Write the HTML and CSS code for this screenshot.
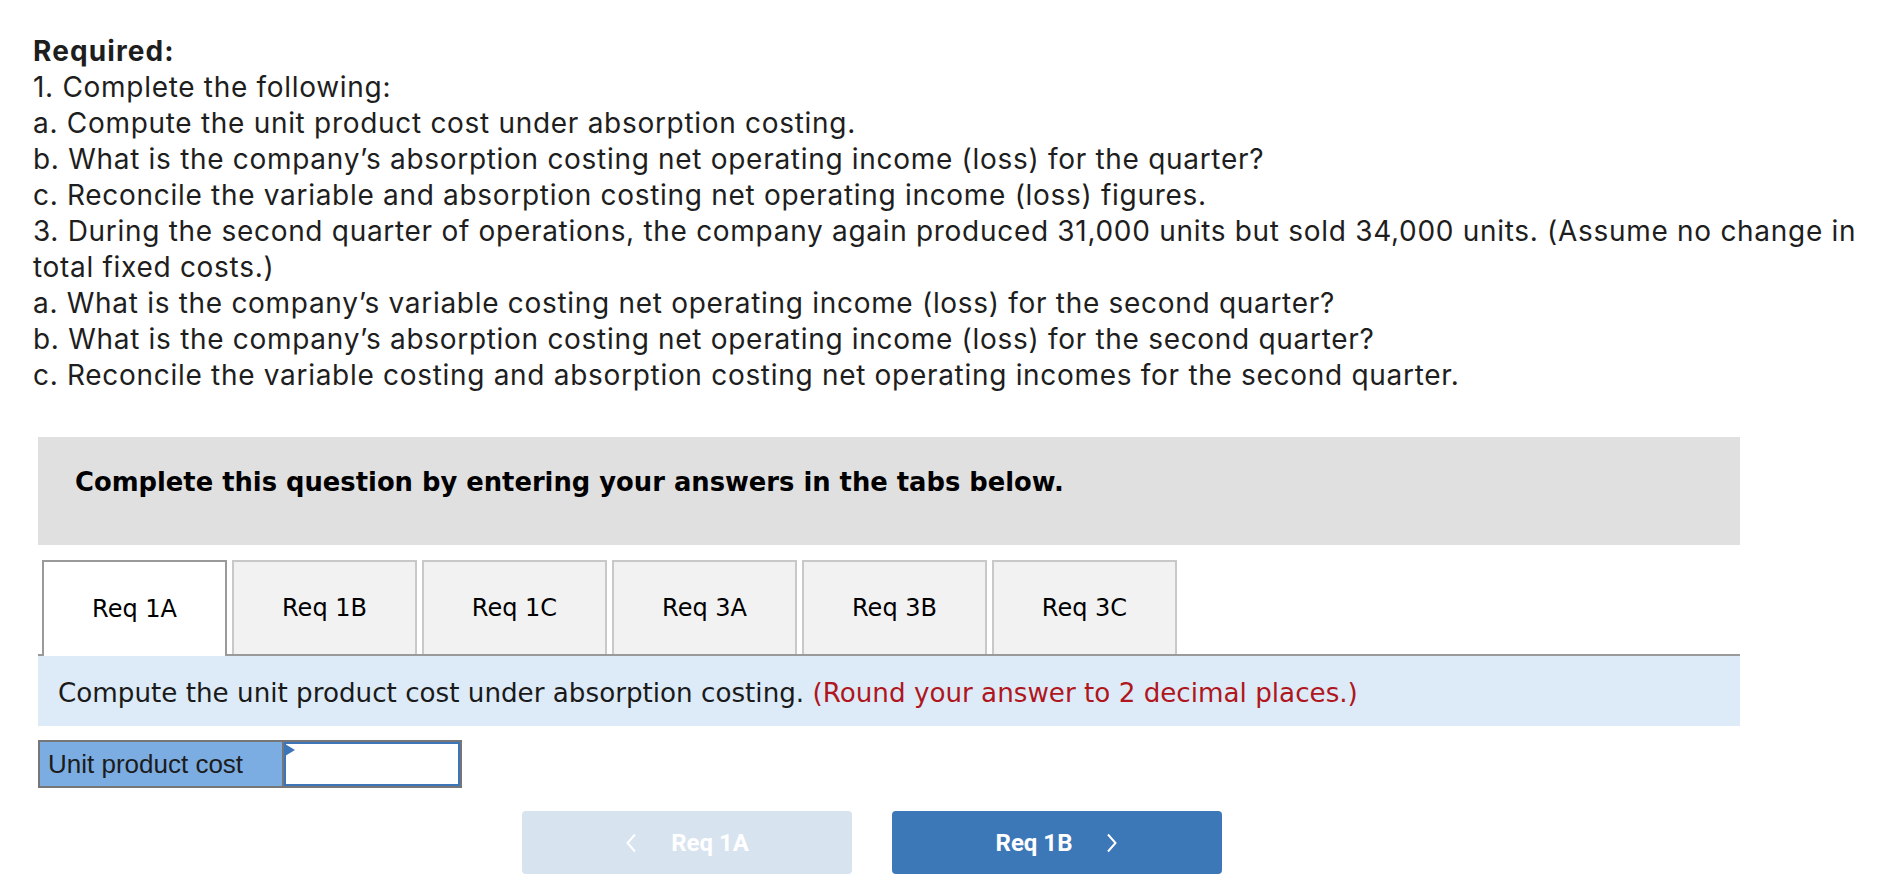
FILE: index.html
```html
<!DOCTYPE html>
<html lang="en">
<head>
<meta charset="utf-8">
<title>Required</title>
<link rel="stylesheet" href="styles.css">
</head>
<body>
<div class="required">
  <div class="req-title">Required:</div>
  <div>1. Complete the following:</div>
  <div>a. Compute the unit product cost under absorption costing.</div>
  <div>b. What is the company’s absorption costing net operating income (loss) for the quarter?</div>
  <div>c. Reconcile the variable and absorption costing net operating income (loss) figures.</div>
  <div>3. During the second quarter of operations, the company again produced 31,000 units but sold 34,000 units. (Assume no change in total fixed costs.)</div>
  <div>a. What is the company’s variable costing net operating income (loss) for the second quarter?</div>
  <div>b. What is the company’s absorption costing net operating income (loss) for the second quarter?</div>
  <div>c. Reconcile the variable costing and absorption costing net operating incomes for the second quarter.</div>
</div>

<div class="question">
  <div class="instructions">Complete this question by entering your answers in the tabs below.</div>

  <div class="tabs">
    <div class="tab active">Req 1A</div>
    <div class="tab">Req 1B</div>
    <div class="tab">Req 1C</div>
    <div class="tab">Req 3A</div>
    <div class="tab">Req 3B</div>
    <div class="tab">Req 3C</div>
  </div>
  <div class="panel">
    <span>Compute the unit product cost under absorption costing. <span class="hint">(Round your answer to 2 decimal places.)</span></span>
  </div>

  <div class="answer">
    <div class="answer-label">Unit product cost</div>
    <div class="answer-input"><span class="flag"></span></div>
  </div>

  <div class="nav">
    <div class="btn btn-prev">
      <svg class="chev" width="12" height="20" viewBox="0 0 12 20"><path d="M10 1.5 L2.5 10 L10 18.5" fill="none" stroke="#fff" stroke-width="2"/></svg>
      <span>Req 1A</span>
    </div>
    <div class="btn btn-next">
      <span>Req 1B</span>
      <svg class="chev" width="12" height="20" viewBox="0 0 12 20"><path d="M2 1.5 L9.5 10 L2 18.5" fill="none" stroke="#fff" stroke-width="2"/></svg>
    </div>
  </div>
</div>
</body>
</html>
```

FILE: styles.css
```css
html, body {
  margin: 0;
  padding: 0;
  background: #fff;
}

body {
  font-family: Inter, "Open Sans", sans-serif;
  color: #1e1e1e;
}

.required {
  margin: 33px 33px 0 33px;
  font-size: 28px;
  line-height: 36px;
  letter-spacing: 0.7px;
}

.req-title {
  font-weight: 700;
  letter-spacing: 1.1px;
}

.question {
  margin: 44px 0 0 38px;
  width: 1702px;
}

.instructions {
  background: #e0e0e0;
  height: 108px;
  box-sizing: border-box;
  padding: 30px 0 0 37px;
  font-family: "DejaVu Sans", Verdana, sans-serif;
  font-weight: 700;
  font-size: 25.8px;
  color: #000;
}

.tabs {
  display: flex;
  gap: 5px;
  padding-left: 4px;
  margin-top: 15px;
  position: relative;
  z-index: 1;
}

.tab {
  width: 185px;
  height: 94px;
  box-sizing: border-box;
  border: 2px solid #c8c8c8;
  border-bottom: none;
  background: #f2f2f2;
  display: flex;
  align-items: center;
  justify-content: center;
  font-family: "DejaVu Sans", Verdana, sans-serif;
  font-size: 24px;
  color: #000;
}

.tab.active {
  background: #fff;
  border-color: #9a9a9a;
  height: 96px;
  margin-bottom: -2px;
}

.panel {
  border-top: 2px solid #9a9a9a;
  background: #dcebf7;
  height: 70px;
  box-sizing: content-box;
  padding-left: 20px;
  display: flex;
  align-items: center;
  font-family: "DejaVu Sans", Verdana, sans-serif;
  font-size: 26.2px;
  color: #1a1a1a;
}

.panel > span {
  padding-top: 4px;
}

.hint {
  color: #b0161d;
}

.answer {
  display: inline-flex;
  margin-top: 14px;
  border: 2px solid #767676;
  vertical-align: top;
}

.answer-label {
  width: 244px;
  height: 44px;
  box-sizing: border-box;
  padding-left: 8px;
  border-right: 2px solid #767676;
  background: #7badE2;
  font-family: "Liberation Sans", Arial, sans-serif;
  font-size: 26px;
  line-height: 44px;
  color: #1c1c1c;
}

.answer-input {
  width: 176px;
  height: 44px;
  box-sizing: border-box;
  border: 2px solid #3d76b8;
  background: #fff;
  position: relative;
}

.flag {
  position: absolute;
  left: -1px;
  top: 0;
  width: 0;
  height: 0;
  border-top: 6px solid transparent;
  border-bottom: 6px solid transparent;
  border-left: 10px solid #3d76b8;
}

.nav {
  display: flex;
  gap: 40px;
  margin-top: 23px;
  padding-left: 484px;
}

.btn {
  width: 330px;
  height: 63px;
  border-radius: 4px;
  display: flex;
  align-items: center;
  justify-content: center;
  gap: 34px;
  font-family: Roboto, "Open Sans", sans-serif;
  font-weight: 700;
  font-size: 24px;
  color: #fff;
}

.btn-prev {
  background: #d8e3f0;
}

.btn-next {
  background: #3c77b7;
}

.chev {
  display: block;
}
```
